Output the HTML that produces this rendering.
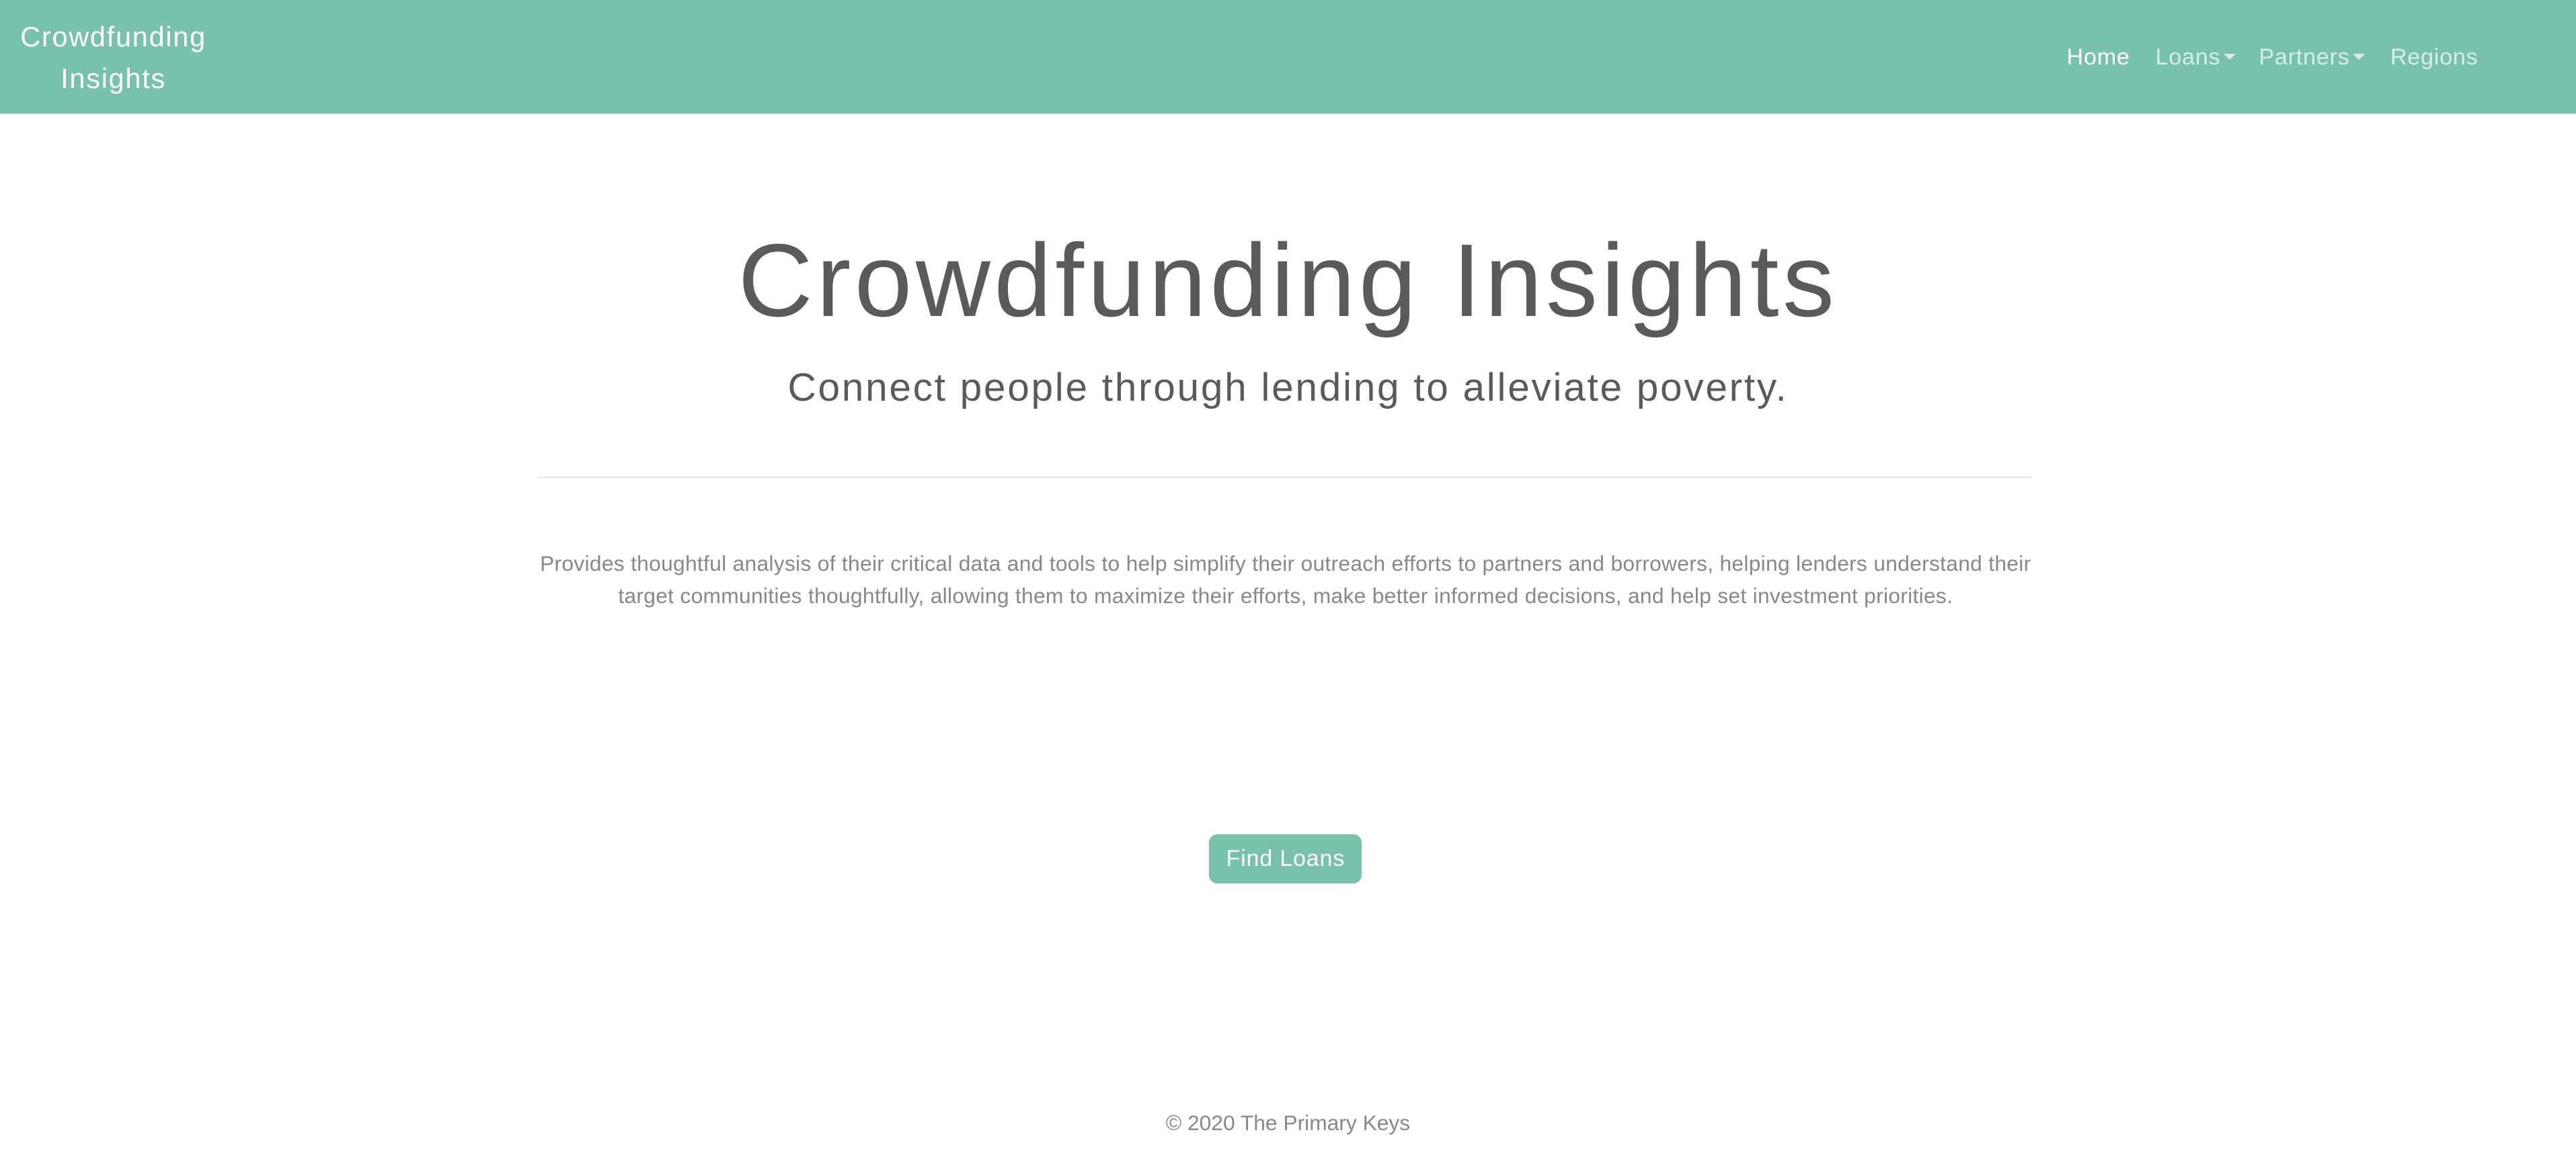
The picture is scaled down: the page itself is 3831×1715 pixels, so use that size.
<!DOCTYPE html>
<html><head><meta charset="utf-8"><style>
html{zoom:2.4432}
body{margin:0;width:1568px;height:702px;background:#fff;font-family:"Liberation Sans",sans-serif;position:relative;overflow:hidden}
.nav{position:absolute;left:0;top:0;width:1568px;height:69px;background:#78c2ad}
.brand{position:absolute;left:4px;top:10px;width:130px;text-align:center;color:#fff;font-size:17px;line-height:25px;letter-spacing:.7px}
.links{position:absolute;top:27px;left:1258px;font-size:14px;color:rgba(255,255,255,.7);white-space:nowrap;letter-spacing:.3px}
.links span{position:absolute;top:0}
.car{display:inline-block;width:0;height:0;border-left:4px solid transparent;border-right:4px solid transparent;border-top:4px solid rgba(255,255,255,.7);vertical-align:3px;margin-left:2px}
h1{position:absolute;left:0;width:1568px;top:131px;margin:0;text-align:center;font-weight:300;font-size:63px;line-height:80px;color:#5a5a5a;letter-spacing:2.2px}
h2{position:absolute;left:0;width:1568px;top:221px;margin:0;text-align:center;font-weight:400;font-size:24px;line-height:30px;color:#5a5a5a;letter-spacing:1.1px}
hr{position:absolute;left:328px;width:909px;top:290px;border:0;border-top:1px solid #e6e6e6;margin:0}
p{position:absolute;left:320px;width:925px;top:333px;margin:0;text-align:center;font-size:13px;line-height:20px;color:#888;letter-spacing:.12px}
.btn{position:absolute;left:736px;top:508px;width:93px;height:30px;background:#78c2ad;border-radius:5px;color:#fff;font-size:14px;line-height:30px;text-align:center;letter-spacing:.3px}
.foot{position:absolute;left:0;width:1568px;top:676px;text-align:center;font-size:13px;color:#888}
</style></head><body>
<div class="nav">
<div class="brand">Crowdfunding<br>Insights</div>
<div class="links">
<span style="left:0;color:#fff">Home</span>
<span style="left:54px">Loans<i class="car"></i></span>
<span style="left:117px">Partners<i class="car"></i></span>
<span style="left:197px">Regions</span>
</div>
</div>
<h1>Crowdfunding Insights</h1>
<h2>Connect people through lending to alleviate poverty.</h2>
<hr>
<p>Provides thoughtful analysis of their critical data and tools to help simplify their outreach efforts to partners and borrowers, helping lenders understand their target communities thoughtfully, allowing them to maximize their efforts, make better informed decisions, and help set investment priorities.</p>
<div class="btn">Find Loans</div>
<div class="foot">© 2020 The Primary Keys</div>
</body></html>
